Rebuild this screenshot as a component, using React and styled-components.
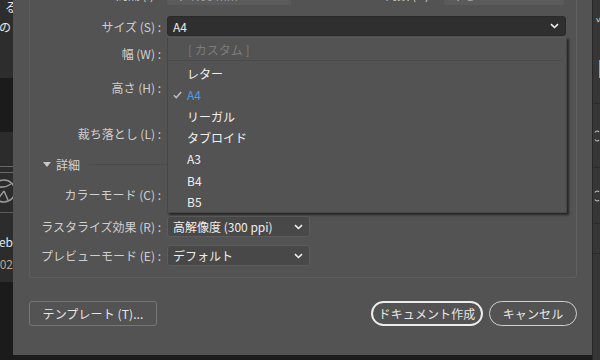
import React from "react";
import styled, { createGlobalStyle } from "styled-components";

const Global = createGlobalStyle`
  html, body { margin: 0; padding: 0; background: #1c1c1c; }
  body { width: 600px; height: 360px; overflow: hidden; font-family: "Noto Sans CJK JP", "Noto Sans", sans-serif; }
  * { box-sizing: border-box; }
`;

const Screen = styled.div`
  display: grid;
  grid-template-columns: 13px 579px 8px;
  width: 600px;
  height: 360px;
  overflow: hidden;
`;

/* ---------- left app strip ---------- */
const LeftStrip = styled.div`
  display: flex;
  flex-direction: column;
  overflow: hidden;
  background: #1c1c1c;
`;
const StripBlock = styled.div`
  height: ${(p) => p.$h}px;
  flex: none;
  background: ${(p) => p.$bg || "#2c2c2c"};
  border-top: ${(p) => (p.$line ? `1px solid ${p.$line}` : "none")};
  display: flex;
  flex-direction: column;
  align-items: flex-end;
  overflow: hidden;
  padding-top: ${(p) => p.$pt || 0}px;
  gap: ${(p) => p.$gap || 0}px;
`;
const StripText = styled.span`
  font-size: 12px;
  line-height: 14px;
  white-space: nowrap;
  color: ${(p) => p.$c || "#e8e8e8"};
  margin-right: ${(p) => p.$mr || 0}px;
`;

/* ---------- right strip ---------- */
const RightStrip = styled.div`
  background: #363636;
  border-left: 1px solid #262626;
  display: flex;
  flex-direction: column;
  overflow: hidden;
`;
const RightBit = styled.div`
  height: ${(p) => p.$h}px;
  flex: none;
  border-bottom: ${(p) => (p.$line ? "1px solid #2a2a2a" : "none")};
  display: flex;
  align-items: center;
  padding-left: ${(p) => p.$pl || 2}px;
  color: #cfcfcf;
  font-size: 11px;
`;
const BlueBar = styled.div`
  width: 3px;
  height: 18px;
  margin-left: 4px;
  background: #7fa6c4;
`;

/* ---------- dialog ---------- */
const Dialog = styled.div`
  height: 355px;
  background: #535353;
  display: flex;
  flex-direction: column;
  padding: 0 15px 0 16px;
  overflow: hidden;
`;
const Panel = styled.div`
  border: 1px solid #5f5f5f;
  border-top: none;
  border-radius: 0 0 3px 3px;
  height: 278px;
  display: flex;
  flex-direction: column;
  padding-bottom: 11px;
`;
const Row = styled.div`
  display: grid;
  grid-template-columns: 132px ${(p) => p.$fw || 399}px;
  column-gap: 5px;
  align-items: center;
  height: ${(p) => p.$h || 22}px;
  margin-top: ${(p) => p.$mt || 0}px;
  flex: none;
`;
const TopRow = styled.div`
  display: flex;
  align-items: flex-end;
  height: 6px;
  overflow: hidden;
  flex: none;
`;
const TopCell = styled.div`
  display: flex;
  align-items: flex-end;
  gap: 6px;
  width: ${(p) => p.$w}px;
  justify-content: flex-end;
  flex: none;
  padding-bottom: ${(p) => p.$pb || 0}px;
`;
const TopField = styled.div`
  width: ${(p) => p.$w}px;
  height: 20px;
  background: #5b5b5b;
  border-radius: 2px;
  color: #9a9a9a;
  font-size: 12px;
  display: flex;
  align-items: center;
  padding-left: 8px;
  flex: none;
`;
const Label = styled.label`
  text-align: right;
  color: #cfcfcf;
  font-size: 12px;
  white-space: nowrap;
  padding-right: 1px;
`;
const FieldWrap = styled.div`
  position: relative;
  height: 100%;
  display: flex;
  align-items: center;
`;
const Select = styled.div`
  width: 100%;
  height: ${(p) => p.$h || 21}px;
  border-radius: 3px;
  background: ${(p) => (p.$open ? "#2f2f2f" : "#484848")};
  border: 1px solid ${(p) => (p.$open ? "#2a2a2a" : "#5c5c5c")};
  color: #ededed;
  font-size: 12px;
  display: flex;
  align-items: center;
  justify-content: space-between;
  padding: 0 6px 0 5px;
`;
const Blank = styled.div`
  width: 100%;
  height: 21px;
  background: #4a4a4a;
  border-radius: 2px;
`;

const Menu = styled.div`
  position: absolute;
  top: 100%;
  left: 0;
  width: 400px;
  height: 176px;
  background: #535353;
  border: 1px solid #474747;
  border-top-color: #5a5a5a;
  box-shadow: 2px 2px 2px rgba(0, 0, 0, 0.55);
  z-index: 5;
  display: flex;
  flex-direction: column;
`;
const MenuHeader = styled.div`
  height: 23px;
  margin: 0 4px 0 0;
  border-bottom: 1px solid #4a4a4a;
  display: flex;
  align-items: center;
  padding-left: 20px;
  color: #7c7c7c;
  font-size: 12px;
  flex: none;
`;
const MenuList = styled.div`
  padding-top: 2px;
  display: flex;
  flex-direction: column;
`;
const Item = styled.div`
  height: 21.3px;
  display: grid;
  grid-template-columns: 19px 1fr;
  align-items: center;
  font-size: 12px;
  color: ${(p) => (p.$active ? "#4d9de8" : "#f0f0f0")};
`;
const Check = styled.span`
  display: flex;
  justify-content: flex-end;
  padding-right: 5px;
`;

const Section = styled.div`
  display: flex;
  align-items: center;
  height: 16px;
  margin-top: 12px;
  padding-left: 13px;
  gap: 5px;
  color: #d2d2d2;
  font-size: 12px;
  flex: none;
`;
const Tri = styled.span`
  width: 0;
  height: 0;
  border-left: 4px solid transparent;
  border-right: 4px solid transparent;
  border-top: 5px solid #c8c8c8;
`;
const Rule = styled.div`
  flex: 1;
  height: 1px;
  background: #4b4b4b;
  margin-left: 4px;
  margin-right: 12px;
`;

const Footer = styled.div`
  display: flex;
  align-items: center;
  justify-content: space-between;
  margin-top: 23px;
`;
const FooterRight = styled.div`
  display: flex;
  gap: 6px;
`;
const Button = styled.button`
  font-family: inherit;
  font-size: 12px;
  height: 25px;
  width: ${(p) => p.$w}px;
  background: transparent;
  color: #e6e6e6;
  border: ${(p) => (p.$primary ? "2px solid #ececec" : p.$pill ? "1px solid #cfcfcf" : "1px solid #777")};
  border-radius: ${(p) => (p.$pill ? "13px" : "3px")};
  padding: 0;
  display: flex;
  align-items: center;
  justify-content: center;
  letter-spacing: 0.1px;
`;

const Chevron = () => (
  <svg width="9" height="6" viewBox="0 0 9 6">
    <path d="M1 1.2 L4.5 4.5 L8 1.2" fill="none" stroke="#f0f0f0" strokeWidth="1.6" />
  </svg>
);

const CheckMark = () => (
  <svg width="9" height="8" viewBox="0 0 9 8">
    <path d="M0.8 4.2 L3.3 6.6 L8.2 1" fill="none" stroke="#bdbdbd" strokeWidth="1.5" />
  </svg>
);

const Stepper = () => (
  <svg width="7" height="16" viewBox="0 0 7 16">
    <path d="M1 4 Q3 1 6 3 M1 12 Q3 15 6 13" fill="none" stroke="#c8c8c8" strokeWidth="1.2" />
  </svg>
);

const Wheel = () => (
  <svg width="13" height="36" viewBox="0 0 13 36">
    <circle cx="4" cy="18" r="11" fill="none" stroke="#9a9a9a" strokeWidth="1.6" />
    <path d="M-4 13 Q4 16 11 11 M4 18 L8 27 M4 18 L-2 26" fill="none" stroke="#9a9a9a" strokeWidth="1.5" />
  </svg>
);

const sizes = ["レター", "A4", "リーガル", "タブロイド", "A3", "B4", "B5"];

export default function App() {
  return (
    <>
      <Global />
      <Screen>
        <LeftStrip>
          <StripBlock $h={78} $bg="#2d2d2d" $pt={0} $gap={6}>
            <StripText $mr={-4}>、る</StripText>
            <StripText $mr={2}>の</StripText>
          </StripBlock>
          <StripBlock $h={54} $bg="#1b1b1b" />
          <StripBlock $h={34} $bg="#2c2c2c" />
          <StripBlock $h={6} $bg="#2c2c2c" $line="#6a6a6a" />
          <StripBlock $h={40} $bg="#2c2c2c" $line="#6a6a6a">
            <Wheel />
          </StripBlock>
          <StripBlock $h={70} $bg="#2c2c2c" $line="#5a5a5a" $pt={22} $gap={8}>
            <StripText $c="#dde6ee">eb</StripText>
            <StripText $c="#b9a58f">02</StripText>
          </StripBlock>
          <StripBlock $h={78} $bg="#1b1b1b" />
        </LeftStrip>

        <Dialog>
          <Panel>
            <TopRow>
              <TopCell $w={131} $pb={3}>
                <Label>間隔 (I) :</Label>
              </TopCell>
              <TopCell $w={130} $pb={1}>
                <TopField $w={124}>◊ 7.06 mm</TopField>
              </TopCell>
              <TopCell $w={145} $pb={3}>
                <Label>列数 (O) :</Label>
              </TopCell>
              <TopCell $w={128} $pb={1}>
                <TopField $w={120}>◊ 1</TopField>
              </TopCell>
            </TopRow>

            <Row $mt={9} $h={22}>
              <Label>サイズ (S) :</Label>
              <FieldWrap>
                <Select $open $h={20}>
                  <span>A4</span>
                  <Chevron />
                </Select>
                <Menu>
                  <MenuHeader>[ カスタム ]</MenuHeader>
                  <MenuList>
                    {sizes.map((s) => (
                      <Item key={s} $active={s === "A4"}>
                        <Check>{s === "A4" ? <CheckMark /> : null}</Check>
                        <span>{s}</span>
                      </Item>
                    ))}
                  </MenuList>
                </Menu>
              </FieldWrap>
            </Row>
            <Row $mt={5}>
              <Label>幅 (W) :</Label>
              <FieldWrap><Blank /></FieldWrap>
            </Row>
            <Row $mt={12}>
              <Label>高さ (H) :</Label>
              <FieldWrap><Blank /></FieldWrap>
            </Row>
            <Row $mt={24}>
              <Label>裁ち落とし (L) :</Label>
              <FieldWrap><Blank /></FieldWrap>
            </Row>

            <Section>
              <Tri />
              <span>詳細</span>
              <Rule />
            </Section>

            <Row $mt={11} $fw={143}>
              <Label>カラーモード (C) :</Label>
              <FieldWrap><Blank /></FieldWrap>
            </Row>
            <Row $mt={11} $h={21} $fw={143}>
              <Label>ラスタライズ効果 (R) :</Label>
              <FieldWrap>
                <Select>
                  <span>高解像度 (300 ppi)</span>
                  <Chevron />
                </Select>
              </FieldWrap>
            </Row>
            <Row $mt={8} $h={21} $fw={143}>
              <Label>プレビューモード (E) :</Label>
              <FieldWrap>
                <Select>
                  <span>デフォルト</span>
                  <Chevron />
                </Select>
              </FieldWrap>
            </Row>
          </Panel>

          <Footer>
            <Button $w={128}>テンプレート (T)...</Button>
            <FooterRight>
              <Button $w={112} $pill $primary>ドキュメント作成</Button>
              <Button $w={88} $pill>キャンセル</Button>
            </FooterRight>
          </Footer>
        </Dialog>

        <RightStrip>
          <RightBit $h={34} $pl={3}>✓</RightBit>
          <RightBit $h={70} $line>
            <BlueBar />
          </RightBit>
          <RightBit $h={64} $line $pl={1}><Stepper /></RightBit>
          <RightBit $h={56} $line $pl={1}><Stepper /></RightBit>
          <RightBit $h={30} $line />
          <RightBit $h={106} />
        </RightStrip>
      </Screen>
    </>
  );
}
